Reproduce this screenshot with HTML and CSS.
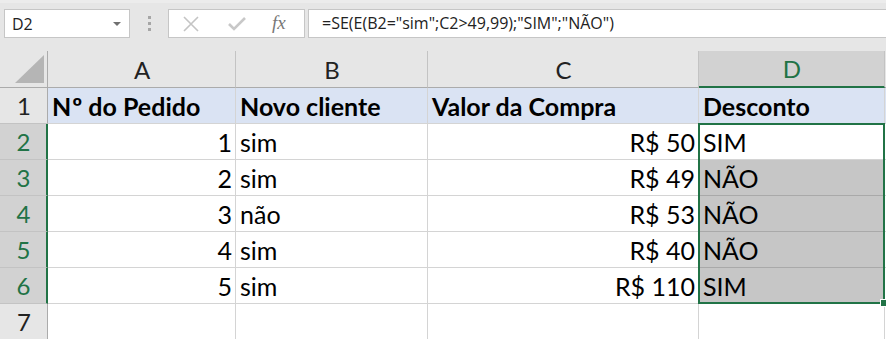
FILE: index.html
```html
<!DOCTYPE html>
<html>
<head>
    <title>Planilha</title>
    <link rel="stylesheet" href="styles.css">
</head>
<body>
<div class="formula-bar">
    <div class="name-box">
        <span>D2</span>
        <svg class="caret" width="8" height="5" viewBox="0 0 8 5"><polygon points="0,0 8,0 4,4" fill="#707070"/></svg>
    </div>
    <div class="grip"><i></i><i></i><i></i></div>
    <div class="fx-buttons">
        <svg width="18" height="16" viewBox="0 0 18 16"><path d="M2 1 L16 15 M16 1 L2 15" stroke="#c4c4c4" stroke-width="1.6" fill="none"/></svg>
        <svg width="18" height="14" viewBox="0 0 18 14"><path d="M1 7 L6 12 L17 1" stroke="#c8c8c8" stroke-width="2.6" fill="none"/></svg>
        <span class="fx">fx</span>
    </div>
    <div class="formula-input">=SE(E(B2="sim";C2&gt;49,99);"SIM";"NÃO")</div>
</div>

<div class="sheet">
    <!-- cabeçalho das colunas -->
    <div class="cell corner">
        <svg width="30" height="29" viewBox="0 0 30 29"><polygon points="29,0 29,28 0,28" fill="#b5b5b5"/></svg>
    </div>
    <div class="cell col-head">A</div>
    <div class="cell col-head">B</div>
    <div class="cell col-head">C</div>
    <div class="cell col-head active">D</div>
    <div class="cell col-head rest"></div>

    <!-- linha 1 -->
    <div class="cell row-head">1</div>
    <div class="cell title"><span>N<span class="ord">º</span> do Pedido</span></div>
    <div class="cell title">Novo cliente</div>
    <div class="cell title">Valor da Compra</div>
    <div class="cell title">Desconto</div>
    <div class="cell title rest"></div>

    <div class="cell row-head active">2</div>
    <div class="cell num">1</div>
    <div class="cell">sim</div>
    <div class="cell num">R$ 50</div>
    <div class="cell">SIM</div>
    <div class="cell rest"></div>

    <div class="cell row-head active">3</div>
    <div class="cell num">2</div>
    <div class="cell">sim</div>
    <div class="cell num">R$ 49</div>
    <div class="cell picked">NÃO</div>
    <div class="cell rest"></div>

    <div class="cell row-head active">4</div>
    <div class="cell num">3</div>
    <div class="cell">não</div>
    <div class="cell num">R$ 53</div>
    <div class="cell picked">NÃO</div>
    <div class="cell rest"></div>

    <div class="cell row-head active">5</div>
    <div class="cell num">4</div>
    <div class="cell">sim</div>
    <div class="cell num">R$ 40</div>
    <div class="cell picked">NÃO</div>
    <div class="cell rest"></div>

    <div class="cell row-head active">6</div>
    <div class="cell num">5</div>
    <div class="cell">sim</div>
    <div class="cell num">R$ 110</div>
    <div class="cell picked">SIM</div>
    <div class="cell rest"></div>

    <div class="cell row-head">7</div>
    <div class="cell"></div>
    <div class="cell"></div>
    <div class="cell"></div>
    <div class="cell"></div>
    <div class="cell rest"></div>

    <div class="selection"><span class="handle"></span></div>
</div>
</body>
</html>
```

FILE: styles.css
```css
/* base */
body {
    margin: 0;
    padding: 0;
    background-color: #e6e6e6;
    font-family: Lato, "Liberation Sans", sans-serif;
    color: #000;
    overflow: hidden;
}

/* barra de fórmulas */
.formula-bar {
    height: 51px;
    box-sizing: border-box;
    padding: 6px 0 0 4px;
    display: flex;
    align-items: flex-start;
    border-top: 3px solid #ececec;
    font-family: "Open Sans", "Noto Sans", sans-serif;
    font-size: 16px;
    color: #222;
}

.name-box {
    width: 126px;
    height: 29px;
    box-sizing: border-box;
    background-color: #fff;
    border: 1px solid #c6c6c6;
    display: flex;
    align-items: center;
    justify-content: space-between;
    padding: 0 8px 0 7px;
}

.name-box .caret {
    margin-top: 2px;
}

.grip {
    width: 38px;
    height: 29px;
    display: flex;
    flex-direction: column;
    align-items: center;
    justify-content: center;
    gap: 3px;
}

.grip i {
    display: block;
    width: 3px;
    height: 3px;
    background-color: #a6a6a6;
}

.fx-buttons {
    width: 137px;
    height: 29px;
    box-sizing: border-box;
    background-color: #fff;
    border: 1px solid #c6c6c6;
    display: flex;
    align-items: center;
    padding-left: 13px;
    gap: 28px;
}

.fx-buttons .fx {
    font-family: "Liberation Serif", serif;
    font-style: italic;
    font-size: 19px;
    color: #777;
    margin-left: -2px;
    margin-top: -2px;
}

.formula-input {
    flex: 1;
    height: 29px;
    box-sizing: border-box;
    margin-left: 3px;
    background-color: #fff;
    border: 1px solid #c6c6c6;
    border-right: none;
    padding-left: 13px;
    line-height: 26px;
    white-space: nowrap;
}

/* planilha */
.sheet {
    position: relative;
    display: grid;
    grid-template-columns: 48px 188px 192px 271px 186px 1fr;
    grid-template-rows: 37px repeat(7, 36px);
    background-color: #fff;
    font-size: 25px;
}

.cell {
    box-sizing: border-box;
    border-right: 1px solid #d4d4d4;
    border-bottom: 1px solid #d4d4d4;
    padding: 0 3px 0 4px;
    display: flex;
    align-items: center;
    white-space: nowrap;
    background-color: #fff;
}

.cell.num {
    justify-content: flex-end;
}

.cell.rest {
    border-right: none;
}

.corner {
    background-color: #e6e6e6;
    border-right: 1px solid #ababab;
    border-bottom: 1px solid #ababab;
    align-items: flex-end;
    justify-content: flex-end;
    padding: 0 2px 3px 0;
}

.col-head {
    background-color: #e6e6e6;
    border-right: 1px solid #c3c3c3;
    border-bottom: 1px solid #ababab;
    justify-content: center;
    color: #222;
    font-size: 24px;
}

.col-head.active {
    background-color: #d2d2d2;
    color: #217346;
    border-bottom: 2px solid #217346;
}

.row-head {
    background-color: #e6e6e6;
    border-right: 1px solid #ababab;
    border-bottom: 1px solid #c3c3c3;
    justify-content: center;
    color: #222;
    font-size: 24px;
}

.row-head.active {
    background-color: #d2d2d2;
    color: #217346;
    border-right: 2px solid #217346;
}

.title {
    background-color: #dae3f3;
    font-weight: bold;
}

.title .ord {
    padding-left: 1px;
}

.picked {
    background-color: #c6c6c6;
    border-bottom-color: #a9a9a9;
}

/* seleção D2:D6 */
.selection {
    position: absolute;
    left: 698px;
    top: 72px;
    width: 187px;
    height: 181px;
    box-sizing: border-box;
    border: 2px solid #217346;
}

.selection .handle {
    position: absolute;
    right: -5px;
    bottom: -5px;
    width: 6px;
    height: 6px;
    background-color: #217346;
    border: 1px solid #fff;
}
```
